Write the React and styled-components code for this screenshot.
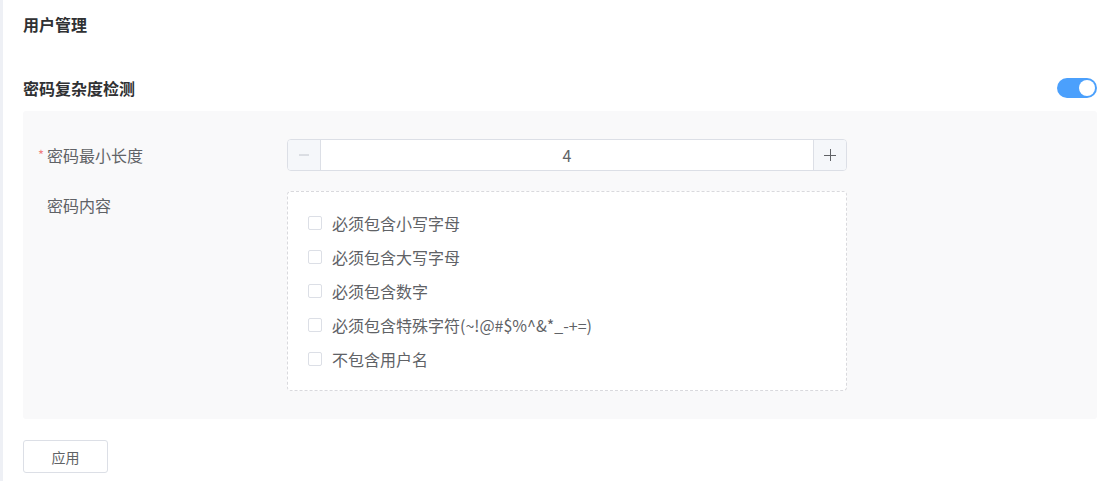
import React from 'react';
import styled, { createGlobalStyle } from 'styled-components';

const GlobalStyle = createGlobalStyle`
    body {
        margin: 0;
        background: #fff;
        font-family: "Noto Sans CJK SC", "Noto Sans", "Liberation Sans", sans-serif;
    }
`;

const Page = styled.div`
    display: flex;
    height: 481px;
    background: #fff;
`;

const SideStrip = styled.div`
    width: 3px;
    flex: none;
    background: #eef0f5;
`;

const Main = styled.div`
    flex: 1;
    padding: 0 11px 0 20px;
`;

const Title = styled.div`
    font-size: 16px;
    font-weight: bold;
    line-height: 48px;
    color: #303133;
`;

const SectionHeader = styled.div`
    display: flex;
    align-items: center;
    justify-content: space-between;
    height: 46px;
    margin-top: 17px;
    font-size: 16px;
    font-weight: bold;
    color: #303133;
`;

const Toggle = styled.div`
    position: relative;
    width: 40px;
    height: 20px;
    border-radius: 10px;
    background: ${p => (p.on ? '#4ba0fc' : '#dcdfe6')};
    &::after {
        content: '';
        position: absolute;
        top: 2px;
        left: ${p => (p.on ? '22px' : '2px')};
        width: 16px;
        height: 16px;
        border-radius: 50%;
        background: #fff;
    }
`;

const Panel = styled.div`
    background: #f9f9fa;
    border-radius: 3px;
    padding: 28px 15px;
`;

const FormRow = styled.div`
    display: flex;
    align-items: flex-start;
    margin-bottom: ${p => (p.last ? '0' : '20px')};
`;

const Label = styled.div`
    width: 249px;
    flex: none;
    display: flex;
    align-items: center;
    line-height: 32px;
    height: 32px;
    font-size: 16px;
    color: #606266;
    margin-top: ${p => p.offset || 0}px;
`;

const Star = styled.span`
    width: 9px;
    color: #f08080;
    font-size: 13px;
`;

const Stepper = styled.div`
    display: flex;
    width: 560px;
    height: 32px;
    box-sizing: border-box;
    border: 1px solid #dcdfe6;
    border-radius: 4px;
    background: #fff;
    overflow: hidden;
`;

const StepButton = styled.div`
    width: 32px;
    flex: none;
    display: flex;
    align-items: center;
    justify-content: center;
    background: #f5f7fa;
    color: ${p => (p.disabled ? '#c0c4cc' : '#606266')};
    border-${p => (p.side === 'left' ? 'right' : 'left')}: 1px solid #dcdfe6;
`;

const StepValue = styled.div`
    flex: 1;
    text-align: center;
    line-height: 30px;
    font-size: 16px;
    color: #606266;
`;

const OptionBox = styled.div`
    width: 560px;
    box-sizing: border-box;
    border: 1px dashed #d9d9dd;
    border-radius: 4px;
    background: #fff;
    padding: 14px 20px;
`;

const OptionRow = styled.label`
    display: flex;
    align-items: center;
    height: 34px;
    font-size: 16px;
    color: #606266;
`;

const Box = styled.span`
    width: 14px;
    height: 14px;
    box-sizing: border-box;
    border: 1px solid #dcdfe6;
    border-radius: 2px;
    background: #fff;
    margin-right: 10px;
    flex: none;
`;

const ApplyButton = styled.button`
    margin-top: 21px;
    width: 85px;
    height: 33px;
    border: 1px solid #dcdfe6;
    border-radius: 3px;
    background: #fff;
    color: #606266;
    font-family: inherit;
    font-size: 14px;
    padding: 0;
`;

const options = [
    '必须包含小写字母',
    '必须包含大写字母',
    '必须包含数字',
    '必须包含特殊字符(~!@#$%^&*_-+=)',
    '不包含用户名'
];

const Minus = () => (
    <svg width="12" height="12" viewBox="0 0 12 12">
        <path d="M1 6h10" stroke="currentColor" strokeWidth="1" />
    </svg>
);

const Plus = () => (
    <svg width="12" height="12" viewBox="0 0 12 12">
        <path d="M0 6.5h12M6.5 0v12" stroke="currentColor" strokeWidth="1" />
    </svg>
);

export default function App() {
    return (
        <Page>
            <GlobalStyle />
            <SideStrip />
            <Main>
                <Title>用户管理</Title>
                <SectionHeader>
                    密码复杂度检测
                    <Toggle on />
                </SectionHeader>
                <Panel>
                    <FormRow>
                        <Label><Star>*</Star>密码最小长度</Label>
                        <Stepper>
                            <StepButton side="left" disabled><Minus /></StepButton>
                            <StepValue>4</StepValue>
                            <StepButton side="right"><Plus /></StepButton>
                        </Stepper>
                    </FormRow>
                    <FormRow last>
                        <Label offset={-2}><Star />密码内容</Label>
                        <OptionBox>
                            {options.map(text => (
                                <OptionRow key={text}>
                                    <Box />
                                    {text}
                                </OptionRow>
                            ))}
                        </OptionBox>
                    </FormRow>
                </Panel>
                <ApplyButton>应用</ApplyButton>
            </Main>
        </Page>
    );
}
